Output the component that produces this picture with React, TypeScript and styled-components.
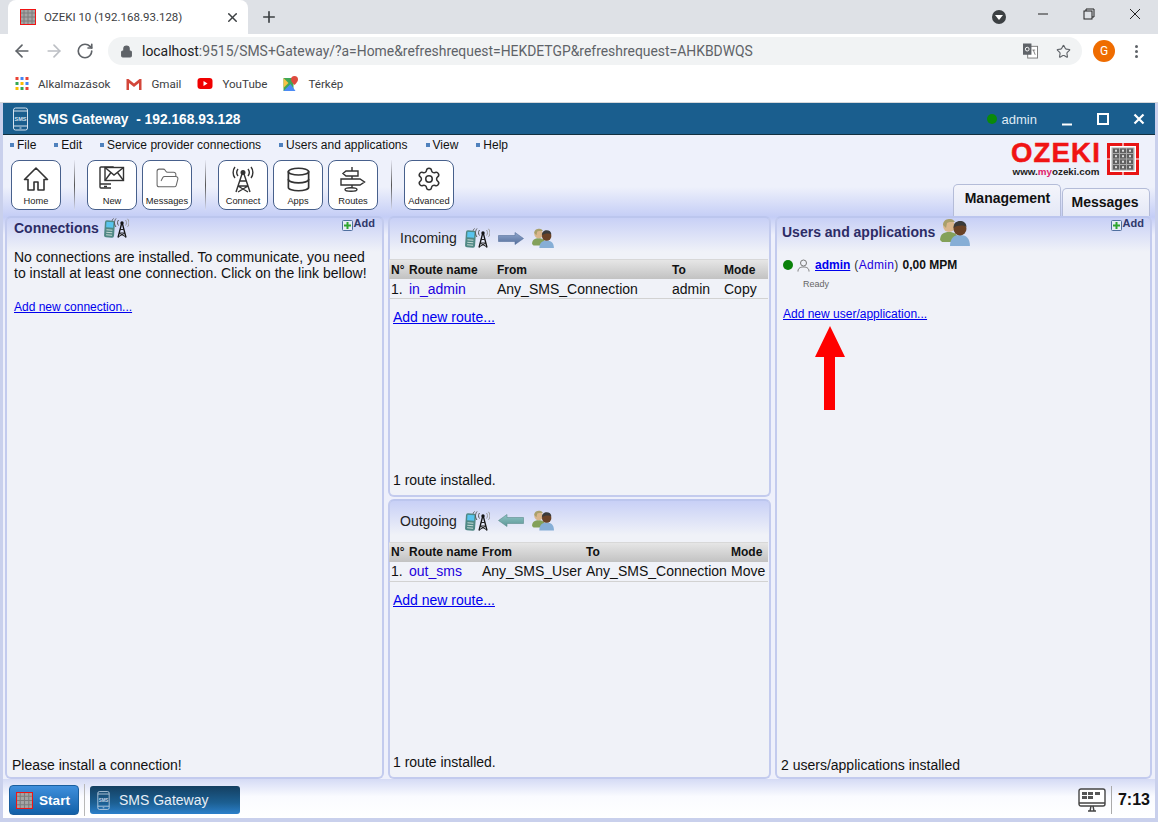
import React, { FC, ReactNode } from 'react'
import styled, { createGlobalStyle } from 'styled-components'
import { ArrowLeft, ArrowRight, RotateCw, Plus, X, Lock, Star, FolderOpen, Database, Settings } from 'lucide-react'

const GlobalStyle = createGlobalStyle`
  html, body { margin: 0; padding: 0; height: 100%; overflow: hidden; background: #fff; }
  * { box-sizing: border-box; }
  body { font-family: "Liberation Sans", Arial, sans-serif; }
`

const Page = styled.div`
  width: 1158px;
  height: 822px;
  display: flex;
  flex-direction: column;
`

/* browser chrome */
const TabStrip = styled.div`
  height: 34px;
  background: #dee1e6;
  display: flex;
  align-items: flex-end;
  padding-left: 8px;
  flex: none;
`
const BrowserTab = styled.div`
  width: 240px;
  height: 34px;
  background: #fff;
  border-radius: 8px 8px 0 0;
  display: flex;
  align-items: center;
  padding: 0 0 0 12px;
  gap: 8px;
  font: 11.5px Roboto, "Noto Sans", sans-serif;
  color: #3c4043;
`
const TabTitle = styled.span`
  flex: 1;
  white-space: nowrap;
`
const TabClose = styled.span`
  display: flex;
  margin-right: 8px;
  color: #3c4043;
`
const NewTab = styled.span`
  display: flex;
  margin: 0 auto 0 12px;
  align-self: center;
  color: #3c4043;
`
const WindowControls = styled.div`
  display: flex;
  align-items: center;
  align-self: stretch;
  margin-bottom: 6px;
`
const ProfileDot = styled.span`
  width: 14px;
  height: 14px;
  border-radius: 50%;
  background: #3c4043;
  margin: 5px 14px 0 0;
  display: flex;
  align-items: center;
  justify-content: center;
  &::after {
    content: '';
    border-left: 4px solid transparent;
    border-right: 4px solid transparent;
    border-top: 5px solid #fff;
    margin-top: 2px;
  }
`
const WinBtn = styled.span`
  width: 46px;
  display: flex;
  justify-content: center;
  color: #222;
`
const NavBar = styled.div`
  height: 34px;
  background: #fff;
  display: flex;
  align-items: center;
  padding-left: 12px;
  flex: none;
`
const NavIcon = styled.span<{ $off?: boolean }>`
  display: flex;
  width: 32px;
  color: ${p => (p.$off ? '#bcbfc4' : '#5f6368')};
`
const Omnibox = styled.div`
  width: 974px;
  height: 28px;
  border-radius: 14px;
  background: #f1f3f4;
  display: flex;
  align-items: center;
  padding: 0 11px 0 12px;
  color: #5f6368;
  font: 13.92px Roboto, "Noto Sans", sans-serif;
`
const Url = styled.span`
  margin-left: 9px;
  flex: 1;
  white-space: nowrap;
  b { font-weight: 400; color: #202124; }
`
const OmniIcon = styled.span`
  display: flex;
  margin-left: 18px;
  color: #5f6368;
`
const Avatar = styled.span`
  width: 22px;
  height: 22px;
  border-radius: 50%;
  background: #ef6c00;
  color: #fff;
  font: 12px Roboto, sans-serif;
  display: flex;
  align-items: center;
  justify-content: center;
  margin-left: 11px;
`
const Kebab = styled.span`
  margin-left: 20px;
  width: 4px;
  display: flex;
  flex-direction: column;
  gap: 2px;
  i { width: 3px; height: 3px; border-radius: 50%; background: #5f6368; display: block; }
`
const Bookmarks = styled.div`
  height: 35px;
  background: #fff;
  display: flex;
  align-items: center;
  padding: 0 0 3px 15px;
  font: 11.6px Roboto, "Noto Sans", sans-serif;
  color: #3c4043;
  flex: none;
  border-bottom: 1px solid #d5d7da;
`
const Bookmark = styled.span`
  display: flex;
  align-items: center;
  gap: 9px;
  margin-right: 16px;
  white-space: nowrap;
`

/* application window */
const AppWindow = styled.div`
  flex: 1;
  min-height: 0;
  display: flex;
  flex-direction: column;
  padding: 0 3px 4px;
  background: #c9d0ec;
`
const TitleBar = styled.div`
  height: 32px;
  background: #1a5e8e;
  border-bottom: 1px solid #12303f;
  display: flex;
  align-items: center;
  color: #fff;
  padding: 1px 10px 0 9px;
  flex: none;
`
const AppName = styled.span`
  font-size: 13.8px;
  font-weight: 700;
  margin-left: 9px;
  white-space: pre;
  flex: 1;
`
const UserDot = styled.span`
  width: 10px;
  height: 10px;
  border-radius: 50%;
  background: #0a8a0a;
  margin-right: 5px;
`
const UserName = styled.span`
  font-size: 13px;
  color: #dfeaf4;
  margin-right: 24px;
`
const TitleBtns = styled.div`
  display: flex;
  align-items: center;
  gap: 24px;
`
const Body = styled.div`
  flex: 1;
  min-height: 0;
  display: flex;
  flex-direction: column;
  background: linear-gradient(#eef1fb 0, #eef1fb 52px, #c4cdf6 82px, #eef0fb 100px);
`
const Header = styled.div`
  height: 81px;
  flex: none;
  display: flex;
  justify-content: space-between;
`
const HeaderLeft = styled.div`
  display: flex;
  flex-direction: column;
  padding: 3px 0 0 7px;
`
const Menu = styled.div`
  display: flex;
  height: 14px;
  align-items: center;
  font-size: 12px;
  color: #111;
`
const MenuItem = styled.span<{ $gap: number }>`
  display: flex;
  align-items: center;
  margin-right: ${p => p.$gap}px;
  white-space: nowrap;
  &::before {
    content: '';
    width: 4px;
    height: 4px;
    background: #4f81bd;
    margin-right: 3px;
  }
`
const Toolbar = styled.div`
  display: flex;
  margin-top: 8px;
  padding-left: 1px;
  align-items: flex-start;
`
const ToolButton = styled.div`
  width: 50px;
  height: 50px;
  background: #fff;
  border: 1px solid #47608c;
  border-radius: 8px;
  display: flex;
  flex-direction: column;
  align-items: center;
  justify-content: space-between;
  padding: 5px 0 3px;
  font-size: 9.3px;
  color: #222;
  margin-right: 5px;
  svg { flex: none; }
`
const ToolSep = styled.span`
  width: 1px;
  height: 50px;
  margin: 0 12px 0 8px;
  background: linear-gradient(#e8eaf6, #555 50%, #d8dcf2);
`
const HeaderRight = styled.div`
  display: flex;
  flex-direction: column;
  align-items: flex-end;
  justify-content: space-between;
  padding: 8px 5px 0 0;
`
const LogoWrap = styled.div`
  display: flex;
  gap: 6px;
  margin-right: 11px;
`
const LogoText = styled.div`
  display: flex;
  flex-direction: column;
  align-items: center;
  margin-top: -2px;
`
const LogoWord = styled.span`
  font-size: 27.5px;
  line-height: 24px;
  font-weight: 700;
  color: #f01414;
  letter-spacing: 1.2px;
  -webkit-text-stroke: 0.5px #f01414;
`
const LogoUrl = styled.span`
  font-size: 9.8px;
  line-height: 10px;
  margin-top: 2px;
  font-weight: 700;
  color: #222;
  em { font-style: normal; color: #e0206a; }
`
const Tabs = styled.div`
  display: flex;
  align-items: flex-end;
  gap: 1px;
`
const ModeTab = styled.div<{ $active?: boolean }>`
  height: ${p => (p.$active ? 32 : 28)}px;
  width: ${p => (p.$active ? 108 : 88)}px;
  border: 1px solid #b4bcd8;
  border-bottom: none;
  border-radius: 5px 5px 0 0;
  background: linear-gradient(#f4f5fb, #e4e8f6);
  font-size: 14px;
  font-weight: 700;
  color: #111;
  display: flex;
  justify-content: center;
  padding: 5px ${p => (p.$active ? 0 : 2)}px 0 ${p => (p.$active ? 1 : 0)}px;
`

const Main = styled.div`
  flex: 1;
  min-height: 0;
  display: grid;
  grid-template-columns: 379px 383px 377px;
  column-gap: 4px;
  padding: 0 0 0 2px;
`
const Column = styled.div`
  display: flex;
  flex-direction: column;
  gap: 2px;
  min-height: 0;
`
const Panel = styled.section`
  flex: 1;
  min-height: 0;
  position: relative;
  display: flex;
  flex-direction: column;
  border: 2px solid #c3cbee;
  border-top-color: #bcc6ee;
  border-radius: 6px;
  background: linear-gradient(#c8d0f6 0, #f0f2f8 34px);
`
const PanelHead = styled.div<{ $h: number; $l: number; $r: number }>`
  display: flex;
  justify-content: space-between;
  align-items: flex-start;
  padding: 0 ${p => p.$r}px 0 ${p => p.$l}px;
  height: ${p => p.$h}px;
  flex: none;
`
const PanelTitle = styled.div<{ $h?: number }>`
  display: flex;
  align-items: center;
  gap: 5px;
  height: ${p => (p.$h ? `${p.$h}px` : 'auto')};
  font-size: 14px;
  font-weight: 700;
  color: #2c2c66;
`
const AddLink = styled.span`
  display: flex;
  align-items: flex-start;
  font-size: 11px;
  font-weight: 700;
  color: #30386a;
  margin-top: -1px;
`
const Plain = styled.div`
  font-size: 14px;
  line-height: 16px;
  color: #111;
  padding: 0 7px;
`
const LinkLine = styled.div<{ $top: number; $l: number }>`
  line-height: 16px;
  margin-top: ${p => p.$top}px;
  padding-left: ${p => p.$l}px;
`
const SmallLink = styled.a`
  display: inline-block;
  font-size: 12px;
  color: #00e;
  text-decoration: underline;
`
const RouteHead = styled.div`
  height: 41px;
  flex: none;
  display: flex;
  align-items: center;
  gap: 8px;
  font-size: 14px;
  color: #222;
  padding: 0 0 1px 10px;
`
const Row = styled.div<{ $cols: string; $head?: boolean }>`
  display: grid;
  grid-template-columns: ${p => p.$cols};
  align-items: center;
  margin: 0 1px 0 -1px;
  padding-left: 2px;
  white-space: nowrap;
  height: 20px;
  font-size: ${p => (p.$head ? 12 : 14)}px;
  font-weight: ${p => (p.$head ? 700 : 400)};
  color: #111;
  background: ${p => (p.$head ? 'linear-gradient(#e6e6e6, #c2c2c2)' : 'none')};
  border-top: ${p => (p.$head ? '1px solid #d8d8d8' : 'none')};
  border-bottom: ${p => (p.$head ? 'none' : '1px solid #d2d2d2')};
`
const RouteName = styled.span`
  color: #2200dd;
`
const RouteLink = styled.a`
  display: inline-block;
  align-self: flex-start;
  font-size: 14px;
  color: #00e;
  text-decoration: underline;
  margin: 10px 0 0 3px;
`
const Status = styled.div<{ $b: number; $l: number }>`
  margin-top: auto;
  font-size: 14px;
  line-height: 16px;
  color: #111;
  padding: 0 0 ${p => p.$b}px ${p => p.$l}px;
`
const UserRow = styled.div`
  display: flex;
  align-items: center;
  font-size: 12px;
  margin: 3px 0 0 6px;
  height: 16px;
`
const GreenDot = styled.span`
  width: 10px;
  height: 10px;
  border-radius: 50%;
  background: #0a820a;
  margin-right: 4px;
`
const UserLink = styled.a`
  margin-left: 5px;
  font-weight: 700;
  color: #00e;
  text-decoration: underline;
`
const Role = styled.span`
  color: #2200dd;
  margin: 0 4px 0 4px;
  letter-spacing: 0.3px;
  i { font-style: normal; color: #333; }
`
const Rate = styled.b`
  color: #111;
`
const Ready = styled.div`
  font-size: 9px;
  color: #666;
  margin: 6px 0 0 26px;
`
const Arrow = styled.svg`
  position: absolute;
  left: 38px;
  top: 108px;
`

/* taskbar */
const Taskbar = styled.div`
  height: 39px;
  flex: none;
  display: flex;
  align-items: center;
  padding: 3px 0 0 6px;
  background: linear-gradient(#d5dbf5, #fafbff 45%, #fff);
`
const StartButton = styled.div`
  width: 70px;
  height: 30px;
  border-radius: 4px;
  border: 1px solid #1a5e9e;
  background: linear-gradient(#3f8fdc, #1260a8);
  display: flex;
  align-items: center;
  gap: 6px;
  padding-left: 6px;
  font-size: 13.6px;
  font-weight: 700;
  color: #fff;
`
const TaskSep = styled.span`
  width: 1px;
  height: 32px;
  background: #b8b8b8;
  margin: 0 5px;
`
const TaskItem = styled.div`
  width: 150px;
  height: 28px;
  border-radius: 3px;
  background: linear-gradient(#143f60, #1c5f92 60%, #2b7fca);
  display: flex;
  align-items: center;
  gap: 9px;
  padding-left: 7px;
  font-size: 14px;
  color: #e8eef6;
`
const Tray = styled.div`
  margin-left: auto;
  display: flex;
  align-items: center;
  padding-right: 5px;
`
const Clock = styled.span`
  font-size: 16px;
  font-weight: 700;
  color: #111;
  margin-left: 5px;
  padding-left: 6px;
  border-left: 1px solid #aaa;
  line-height: 28px;
`

/* drawings */
const OzekiMark: FC<{ size: number }> = ({ size }) => (
  <svg width={size} height={size} viewBox="0 0 16 16">
    <rect x="0.5" y="0.5" width="15" height="15" fill="#a5a5a5" stroke="#f01414" />
    <path d="M4 1v14M8 1v14M12 1v14M1 4h14M1 8h14M1 12h14" stroke="#7d7d7d" />
  </svg>
)

const PhoneOutline: FC<{ color: string; w: number; h: number }> = ({ color, w, h }) => (
  <svg width={w} height={h} viewBox="0 0 16 24" fill="none" stroke={color}>
    <rect x="1" y="1" width="14" height="22" rx="2" />
    <path d="M1 4h14M1 19h14M7 21h2" />
    <text x="8" y="13.5" fontSize="5.5" fontWeight="700" fontFamily="Liberation Sans" fill={color} stroke="none" textAnchor="middle">SMS</text>
  </svg>
)

const MobileTower: FC = () => (
  <svg width="25" height="20" viewBox="0 0 25 20" fill="none">
    <g transform="rotate(4 5 11)">
      <rect x="0.5" y="2.500" width="10" height="17" rx="2" fill="#4f8884" />
      <rect x="2" y="4" width="7" height="5.500" fill="#58c4ee" />
      <path d="M2.500 12h6M2.500 14.500h6M2.500 17h6" stroke="#c4d8d4" />
    </g>
    <path d="M17.500 6l-3.500 13.500M18.500 6L22 19.500" stroke="#111" strokeWidth="1.300" />
    <path d="M16 11.500h4M15 15h6M14 19l7-4M22 19l-7-4" stroke="#222" />
    <circle cx="18" cy="5" r="1.700" fill="#111" />
    <path d="M14.500 2c-1.300 1.500-1.300 4 0 5.500M12 .5c-2 2.500-2 6 0 8.500M9.500 .5c-.8 .8-1.200 1.500-1.400 2.200" stroke="#555" />
    <path d="M21.500 2c1.300 1.500 1.300 4 0 5.500M23.500 .8c2 2.500 2 6 0 8" stroke="#999" />
  </svg>
)

const People: FC<{ size: number }> = ({ size }) => (
  <svg width={size} height={size * 0.93} viewBox="0 0 30 28">
    <path d="M0 22c0-6 4-8 9-8s9 2 9 8l-3 2H2z" fill="#83a15a" />
    <circle cx="9" cy="8" r="6" fill="#d9b68c" />
    <path d="M3 7c0-5 4-6 7-6s4 2 5 3c-4 0-7 0-8 1l-1 5z" fill="#a9a06a" />
    <path d="M10 28c0-8 4-11 10-11s10 3 10 11z" fill="#86aed6" />
    <circle cx="20" cy="11" r="6.500" fill="#6a4226" />
    <path d="M13.500 10c0-5 3-7 6.500-7s6.500 2 6.500 6c-3-2-9-2-13 1z" fill="#3a3a3a" />
  </svg>
)

const FlowArrow: FC<{ left?: boolean }> = ({ left }) => {
  const id = left ? 'flowOut' : 'flowIn'
  return (
    <svg width="26" height="13" viewBox="0 0 26 13">
      <defs>
        <linearGradient id={id} x1="0" y1="0" x2="0" y2="1">
          <stop offset="0" stopColor={left ? '#8fc4c4' : '#8ea6cc'} />
          <stop offset="1" stopColor={left ? '#5d9898' : '#566f9c'} />
        </linearGradient>
      </defs>
      <path
        d={left ? 'M.5 6.500L9 .5v3h16.500v6H9v3z' : 'M25.500 6.500L17 .5v3H.5v6H17v3z'}
        fill={`url(#${id})`}
        stroke={left ? '#5b8c8c' : '#56709c'}
        strokeWidth="0.6"
      />
    </svg>
  )
}

const AddIcon: FC = () => (
  <svg width="11" height="11" viewBox="0 0 11 11" style={{ marginTop: 3, marginRight: 1 }}>
    <rect x="0.5" y="0.5" width="10" height="10" rx="1" fill="#e6ecf6" stroke="#4f6f9f" />
    <path d="M5.500 2v7M2 5.500h7" stroke="#2fa52f" strokeWidth="2" />
  </svg>
)

const PersonOutline: FC = () => (
  <svg width="13" height="13" viewBox="0 0 13 13" fill="none" stroke="#777">
    <circle cx="6.500" cy="4" r="3" />
    <path d="M1 12.500c0-3.500 2.500-4.500 5.500-4.500s5.500 1 5.500 4.500" />
  </svg>
)

const HomeIcon: FC = () => (
  <svg width="26" height="26" viewBox="0 0 26 26" fill="none" stroke="#333" strokeWidth="1.600" strokeLinejoin="round">
    <path d="M13 2L1.500 13.500H5V24h6v-8h4v8h6V13.500h3.500z" />
  </svg>
)

const NewIcon: FC = () => (
  <svg width="26" height="26" viewBox="0 0 26 26" fill="none" stroke="#333" strokeWidth="1.400">
    <path d="M12 22H2a1 1 0 0 1-1-1V2a1 1 0 0 1 1-1h12v3" />
    <path d="M1 18h11M5 20.500h3" />
    <rect x="6" y="1.500" width="18.500" height="13" fill="#fff" />
    <path d="M6 1.500l9 7.500 9.500-7.500M6 14.500l6-8M24.500 14.500l-6-8" />
  </svg>
)

const TowerIcon: FC = () => (
  <svg width="24" height="27" viewBox="0 0 24 27" fill="none" stroke="#333" strokeWidth="1.400">
    <circle cx="12" cy="6.500" r="1.800" fill="#333" />
    <path d="M11 8L5 26M13 8l6 18M9 15h6M7.500 20h9M7 20l10 6M17 20L7 26" />
    <path d="M7 3c-1.500 2-1.500 5 0 7M4 1C1.500 4 1.500 9 4 12M17 3c1.500 2 1.500 5 0 7M20 1c2.500 3 2.500 8 0 11" />
  </svg>
)

const RouteIcon: FC = () => (
  <svg width="26" height="26" viewBox="0 0 26 26" fill="none" stroke="#333" strokeWidth="1.400">
    <path d="M12 1v4M12 10v3M12 19v3" />
    <path d="M6 5h12v5H6l-3-2.500zM1 13h19l4.500 3-4.500 3H1z" fill="#fff" />
    <ellipse cx="11" cy="23.500" rx="6" ry="1.800" />
  </svg>
)

const LogoGrid: FC = () => (
  <svg width="32" height="32" viewBox="0 0 32 32">
    <rect x="1.500" y="1.500" width="29" height="29" fill="#fff" stroke="#e81414" strokeWidth="3" />
    <path d="M16 0v4M16 28v4M0 16h4M28 16h4" stroke="#fff" strokeWidth="1.200" />
    <rect x="4.500" y="4.500" width="23" height="23" fill="#a8a8a8" />
    {[6, 13, 20].map(x =>
      [5.500, 11, 16.500, 22].map(y => (
        <React.Fragment key={`${x}-${y}`}>
          <rect x={x} y={y} width="6" height="4.500" fill="#5f5f5f" />
          <rect x={x + 2} y={y + 1.200} width="2" height="2" fill="#ddd" />
        </React.Fragment>
      ))
    )}
  </svg>
)

const MonitorIcon: FC = () => (
  <svg width="28" height="24" viewBox="0 0 28 24" fill="none">
    <rect x="1" y="1" width="26" height="17" rx="2" fill="#fff" stroke="#444" strokeWidth="1.400" />
    <path d="M1 15h26M10 23h8M13 18l-1 5M15 18l1 5" stroke="#444" strokeWidth="1.400" />
    <path d="M4 4h5v3H4zM10 4h5v3h-5zM17 4h5v3h-5zM4 8h5v3H4zM10 8h5v3h-5z" fill="#555" />
  </svg>
)

const AppsGrid: FC = () => (
  <svg width="14" height="13" viewBox="0 0 13 13">
    {[
      '#ea4335', '#4285f4', '#ea4335',
      '#34a853', '#fbbc05', '#4285f4',
      '#fbbc05', '#34a853', '#ea4335',
    ].map((c, i) => (
      <rect key={i} x={(i % 3) * 5} y={Math.floor(i / 3) * 5} width="3" height="3" fill={c} />
    ))}
  </svg>
)

const GmailIcon: FC = () => (
  <svg width="16" height="12" viewBox="0 0 15 12">
    <path d="M0 1h2l5.500 4.500L13 1h2v11h-2.500V5L7.500 9 2.500 5v7H0z" fill="#d3463a" />
  </svg>
)

const YoutubeIcon: FC = () => (
  <svg width="16" height="11" viewBox="0 0 15 11">
    <rect width="15" height="11" rx="3" fill="#f00000" />
    <path d="M6 3l4 2.500L6 8z" fill="#fff" />
  </svg>
)

const MapsIcon: FC = () => (
  <svg width="16" height="15" viewBox="0 0 15 15">
    <path d="M0 2h10v13H0z" fill="#3fa757" />
    <path d="M0 15l7-7 5 7z" fill="#4c8bf5" />
    <path d="M0 2l5 5-5 5z" fill="#f6c344" />
    <path d="M11 0a3.500 3.500 0 0 1 3.500 3.500C14.500 6 11 9 11 9S7.500 6 7.500 3.500A3.500 3.500 0 0 1 11 0z" fill="#dd4b3e" />
  </svg>
)

const TranslateIcon: FC = () => (
  <svg width="15" height="16" viewBox="0 0 16 16">
    <rect x="5" y="3" width="10.500" height="12.500" fill="#fff" stroke="#777" />
    <rect x="0" y="0" width="9" height="12" fill="#5f6368" />
    <path d="M11 7l2 5M13 7h-3" stroke="#777" fill="none" />
    <circle cx="4.500" cy="6" r="2" fill="none" stroke="#fff" />
  </svg>
)

const routesIn = '18px 88px 175px 52px 1fr'
const routesOut = '18px 73px 104px 145px 1fr'

const RouteTable: FC<{ cols: string; values: string[]; head: string[] }> = ({ cols, values, head }) => (
  <>
    <Row $cols={cols} $head>
      {head.map(h => (
        <span key={h}>{h}</span>
      ))}
    </Row>
    <Row $cols={cols}>
      <span>1.</span>
      <RouteName>{values[0]}</RouteName>
      <span>{values[1]}</span>
      <span>{values[2]}</span>
      <span>{values[3]}</span>
    </Row>
  </>
)

const MenuEntries: [string, number][] = [
  ['File', 18],
  ['Edit', 18],
  ['Service provider connections', 18],
  ['Users and applications', 18],
  ['View', 18],
  ['Help', 0],
]

const Tool: FC<{ label: string; children: ReactNode }> = ({ label, children }) => (
  <ToolButton>
    {children}
    <span>{label}</span>
  </ToolButton>
)

export default function App() {
  return (
    <Page>
      <GlobalStyle />
      <TabStrip>
        <BrowserTab>
          <OzekiMark size={16} />
          <TabTitle>OZEKI 10 (192.168.93.128)</TabTitle>
          <TabClose>
            <X size={15} strokeWidth={2.4} />
          </TabClose>
        </BrowserTab>
        <NewTab>
          <Plus size={18} strokeWidth={2.2} />
        </NewTab>
        <WindowControls>
          <ProfileDot />
          <WinBtn>
            <svg width="12" height="12" viewBox="0 0 12 12"><path d="M1 6h10" stroke="#222" /></svg>
          </WinBtn>
          <WinBtn>
            <svg width="12" height="12" viewBox="0 0 12 12" fill="none" stroke="#222"><rect x="1" y="3" width="8" height="8" /><path d="M3 3V1h8v8H9" /></svg>
          </WinBtn>
          <WinBtn>
            <svg width="12" height="12" viewBox="0 0 12 12"><path d="M1 1l10 10M11 1L1 11" stroke="#222" /></svg>
          </WinBtn>
        </WindowControls>
      </TabStrip>
      <NavBar>
        <NavIcon><ArrowLeft size={20} strokeWidth={2} /></NavIcon>
        <NavIcon $off><ArrowRight size={20} strokeWidth={2} /></NavIcon>
        <NavIcon><RotateCw size={18} strokeWidth={2.2} /></NavIcon>
        <Omnibox>
          <Lock size={13} fill="#5f6368" strokeWidth={2} />
          <Url><b>localhost</b>:9515/SMS+Gateway/?a=Home&amp;refreshrequest=HEKDETGP&amp;refreshrequest=AHKBDWQS</Url>
          <OmniIcon><TranslateIcon /></OmniIcon>
          <OmniIcon><Star size={15} strokeWidth={1.8} /></OmniIcon>
        </Omnibox>
        <Avatar>G</Avatar>
        <Kebab><i /><i /><i /></Kebab>
      </NavBar>
      <Bookmarks>
        <Bookmark><AppsGrid />Alkalmazások</Bookmark>
        <Bookmark><GmailIcon />Gmail</Bookmark>
        <Bookmark><YoutubeIcon />YouTube</Bookmark>
        <Bookmark><MapsIcon />Térkép</Bookmark>
      </Bookmarks>

      <AppWindow>
        <TitleBar>
          <PhoneOutline color="#d5e2ee" w={17} h={24} />
          <AppName>SMS Gateway  - 192.168.93.128</AppName>
          <UserDot />
          <UserName>admin</UserName>
          <TitleBtns>
            <svg width="12" height="14" viewBox="0 0 12 14"><path d="M1 12.500h10" stroke="#fff" strokeWidth="2" /></svg>
            <svg width="12" height="14" viewBox="0 0 12 14" fill="none"><rect x="1" y="2" width="10" height="10" stroke="#fff" strokeWidth="2" /></svg>
            <svg width="12" height="14" viewBox="0 0 12 14"><path d="M1.500 2.500l9 9M10.500 2.500l-9 9" stroke="#fff" strokeWidth="2.200" /></svg>
          </TitleBtns>
        </TitleBar>
        <Body>
          <Header>
            <HeaderLeft>
              <Menu>
                {MenuEntries.map(([name, gap]) => (
                  <MenuItem key={name} $gap={gap}>{name}</MenuItem>
                ))}
              </Menu>
              <Toolbar>
                <Tool label="Home"><HomeIcon /></Tool>
                <ToolSep />
                <Tool label="New"><NewIcon /></Tool>
                <Tool label="Messages"><FolderOpen size={25} strokeWidth={1} color="#666" /></Tool>
                <ToolSep />
                <Tool label="Connect"><TowerIcon /></Tool>
                <Tool label="Apps"><Database size={27} strokeWidth={1.5} color="#333" /></Tool>
                <Tool label="Routes"><RouteIcon /></Tool>
                <ToolSep />
                <Tool label="Advanced"><Settings size={26} strokeWidth={1.4} color="#333" /></Tool>
              </Toolbar>
            </HeaderLeft>
            <HeaderRight>
              <LogoWrap>
                <LogoText>
                  <LogoWord>OZEKI</LogoWord>
                  <LogoUrl>www.<em>my</em>ozeki.com</LogoUrl>
                </LogoText>
                <LogoGrid />
              </LogoWrap>
              <Tabs>
                <ModeTab $active>Management</ModeTab>
                <ModeTab>Messages</ModeTab>
              </Tabs>
            </HeaderRight>
          </Header>

          <Main>
            <Column>
              <Panel>
                <PanelHead $h={31} $l={7} $r={7}>
                  <PanelTitle $h={20}>Connections <MobileTower /></PanelTitle>
                  <AddLink><AddIcon />Add</AddLink>
                </PanelHead>
                <Plain>
                  No connections are installed. To communicate, you need to install at least one connection. Click on the link bellow!
                </Plain>
                <LinkLine $top={17} $l={7}>
                  <SmallLink href="#">Add new connection...</SmallLink>
                </LinkLine>
                <Status $b={4} $l={5}>Please install a connection!</Status>
              </Panel>
            </Column>
            <Column>
              <Panel>
                <RouteHead>Incoming <MobileTower /><FlowArrow /><People size={22} /></RouteHead>
                <RouteTable
                  cols={routesIn}
                  head={['N°', 'Route name', 'From', 'To', 'Mode']}
                  values={['in_admin', 'Any_SMS_Connection', 'admin', 'Copy']}
                />
                <RouteLink href="#">Add new route...</RouteLink>
                <Status $b={7} $l={3}>1 route installed.</Status>
              </Panel>
              <Panel>
                <RouteHead>Outgoing <MobileTower /><FlowArrow left /><People size={22} /></RouteHead>
                <RouteTable
                  cols={routesOut}
                  head={['N°', 'Route name', 'From', 'To', 'Mode']}
                  values={['out_sms', 'Any_SMS_User', 'Any_SMS_Connection', 'Move']}
                />
                <RouteLink href="#">Add new route...</RouteLink>
                <Status $b={7} $l={3}>1 route installed.</Status>
              </Panel>
            </Column>
            <Column>
              <Panel>
                <PanelHead $h={36} $l={5} $r={6}>
                  <PanelTitle>Users and applications <People size={30} /></PanelTitle>
                  <AddLink><AddIcon />Add</AddLink>
                </PanelHead>
                <UserRow>
                  <GreenDot />
                  <PersonOutline />
                  <UserLink href="#">admin</UserLink>
                  <Role><i>(</i>Admin<i>)</i></Role>
                  <Rate>0,00 MPM</Rate>
                </UserRow>
                <Ready>Ready</Ready>
                <LinkLine $top={16} $l={6}>
                  <SmallLink href="#">Add new user/application...</SmallLink>
                </LinkLine>
                <Arrow width="30" height="84" viewBox="0 0 30 84">
                  <path d="M15 0l15 31H20v53H9V31H0z" fill="#f00" />
                </Arrow>
                <Status $b={4} $l={4}>2 users/applications installed</Status>
              </Panel>
            </Column>
          </Main>

          <Taskbar>
            <StartButton><OzekiMark size={17} />Start</StartButton>
            <TaskSep />
            <TaskItem><PhoneOutline color="#c8d8e8" w={13} h={21} />SMS Gateway</TaskItem>
            <Tray>
              <MonitorIcon />
              <Clock>7:13</Clock>
            </Tray>
          </Taskbar>
        </Body>
      </AppWindow>
    </Page>
  )
}
